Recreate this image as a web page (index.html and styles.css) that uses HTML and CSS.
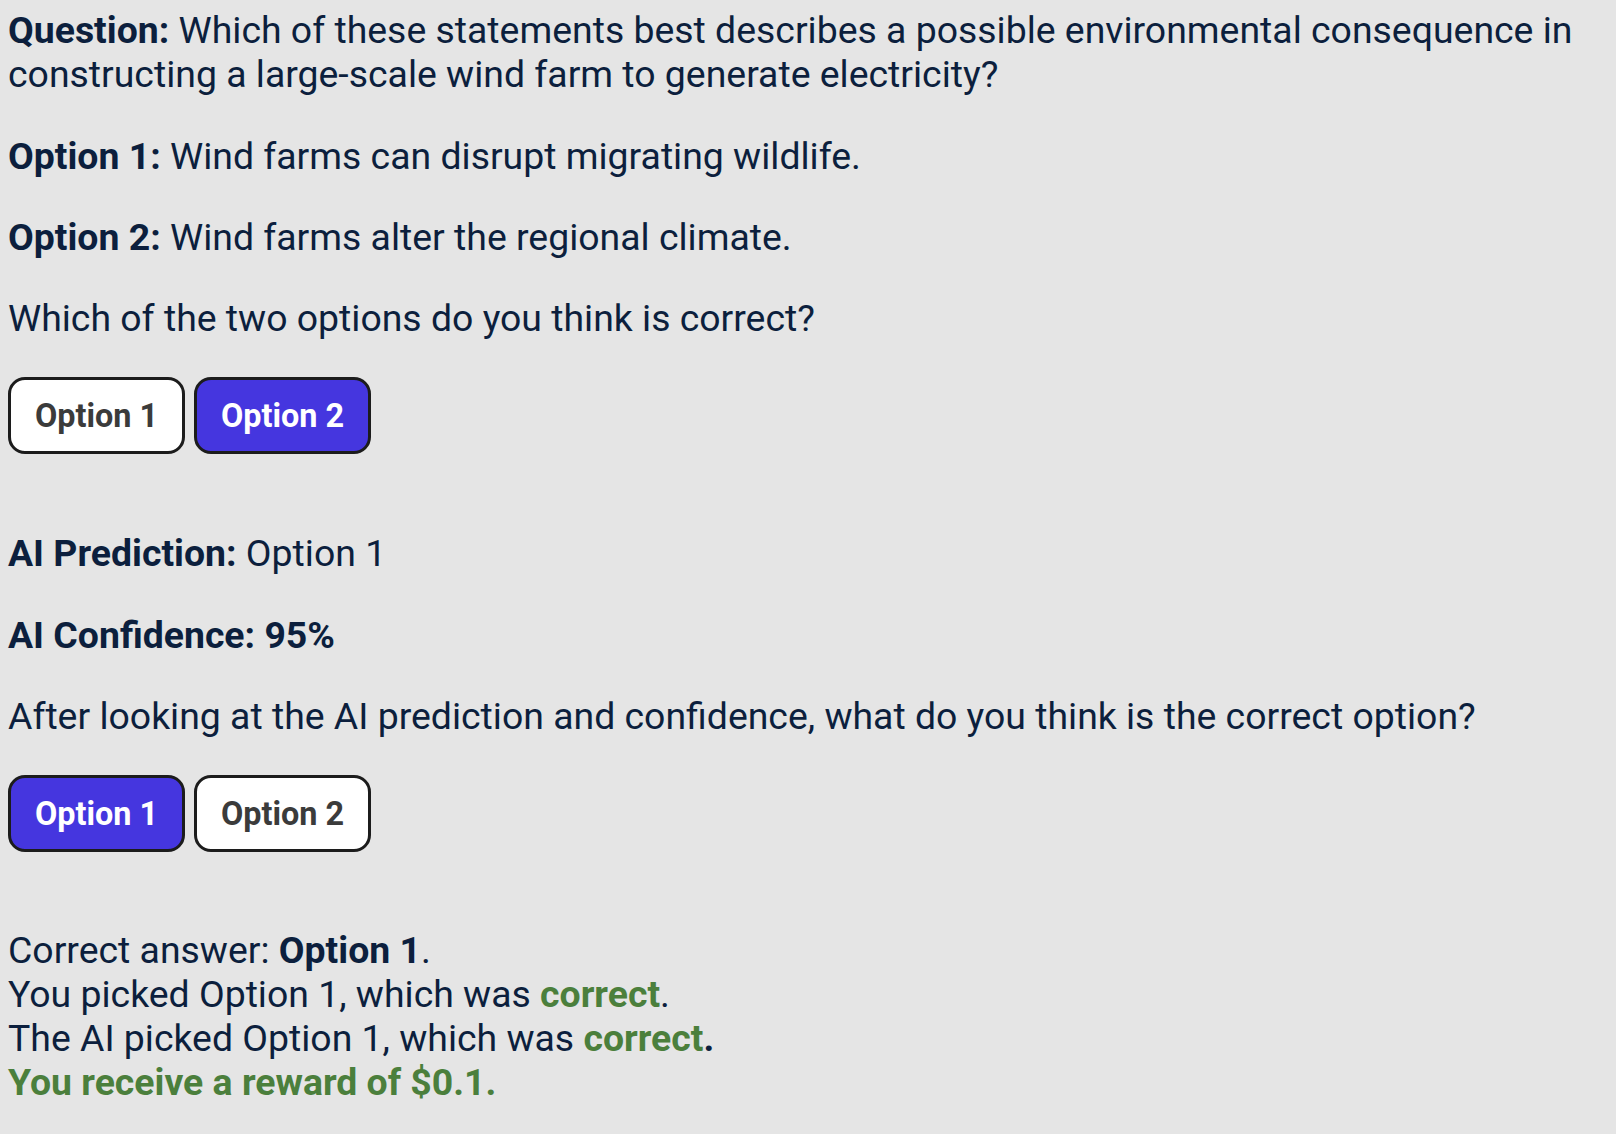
FILE: index.html
```html
<!DOCTYPE html>
<html>
<head>
<meta charset="utf-8">
<link rel="stylesheet" href="styles.css">
</head>
<body>
<div class="page">
  <p class="first"><b>Question:</b> Which of these statements best describes a possible environmental consequence in constructing a large-scale wind farm to generate electricity?</p>
  <p><b>Option 1:</b> Wind farms can disrupt migrating wildlife.</p>
  <p><b>Option 2:</b> Wind farms alter the regional climate.</p>
  <p>Which of the two options do you think is correct?</p>
  <div class="buttons">
    <button class="btn">Option 1</button>
    <button class="btn selected">Option 2</button>
  </div>
  <p class="after-buttons"><b>AI Prediction:</b> Option 1</p>
  <p><b>AI Confidence: 95%</b></p>
  <p>After looking at the AI prediction and confidence, what do you think is the correct option?</p>
  <div class="buttons">
    <button class="btn selected">Option 1</button>
    <button class="btn">Option 2</button>
  </div>
  <div class="result">
    Correct answer: <b>Option 1</b>.<br>
    You picked Option 1, which was <b class="green">correct</b>.<br>
    The AI picked Option 1, which was <b class="green">correct</b><b>.</b><br>
    <b class="green">You receive a reward of $0.1.</b>
  </div>
</div>
</body>
</html>
```

FILE: styles.css
```css
html, body {
  margin: 0;
  padding: 0;
  background: #e5e5e5;
}

body {
  padding: 8px;
  font-family: Roboto, "Liberation Sans", sans-serif;
  font-size: 37.4px;
  line-height: 44.3px;
  color: #0c1f3d;
}

.page p {
  margin: 37px 0;
}

.page p.first {
  margin-top: 0;
}

.buttons {
  display: flex;
  gap: 9px;
  margin-top: 1px;
}

.btn {
  box-sizing: border-box;
  font-family: Roboto, "Liberation Sans", sans-serif;
  font-weight: 700;
  font-size: 32.4px;
  line-height: 1;
  white-space: nowrap;
  color: #3b3b3b;
  background: #ffffff;
  border: 3.5px solid #1c1c1c;
  border-radius: 17px;
  padding: 0;
  width: 177px;
  height: 77px;
  display: flex;
  align-items: center;
  justify-content: center;
}

.btn.selected {
  background: #4536df;
  color: #ffffff;
}

.page p.after-buttons {
  margin-top: 77px;
}

.result {
  margin-top: 76px;
  line-height: 44px;
}

.green {
  color: #4b7f3c;
}
```
